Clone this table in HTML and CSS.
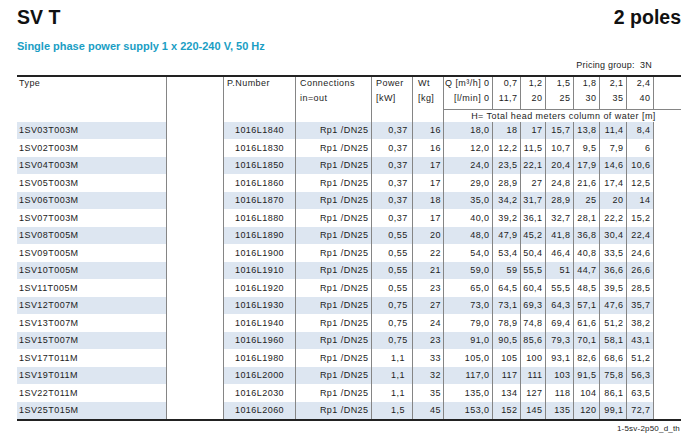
FILE: index.html
```html
<!DOCTYPE html>
<html lang="en">
<head>
<meta charset="utf-8">
<title>SV T - 2 poles</title>
<link rel="stylesheet" href="styles.css">
</head>
<body>
<div class="page">
  <header class="titlebar">
    <h1 class="title">SV T</h1>
    <div class="poles">2 poles</div>
  </header>
  <h2 class="subtitle">Single phase power supply 1 x 220-240 V, 50 Hz</h2>
  <div class="pricing">Pricing group:&nbsp; 3N</div>
  <table class="data">
    <colgroup>
      <col class="w-type"><col class="w-blank"><col class="w-pn"><col class="w-conn"><col class="w-pow"><col class="w-wt"><col class="w-q0"><col class="w-c1"><col class="w-c2"><col class="w-c3"><col class="w-c4"><col class="w-c5"><col class="w-c6"><col class="w-end">
    </colgroup>
    <thead>
      <tr class="h1">
        <th class="hl type" rowspan="3">Type</th>
        <th class="blank" rowspan="3"></th>
        <th class="hl pn" rowspan="3">P.Number</th>
        <th class="hl conn">Connections</th>
        <th class="hl pow">Power</th>
        <th class="hl wt">Wt</th>
        <th class="hq">Q [m³/h] 0</th>
        <th class="hq">0,7</th><th class="hq">1,2</th><th class="hq">1,5</th><th class="hq">1,8</th><th class="hq">2,1</th><th class="hq">2,4</th>
        <th class="blank"></th>
      </tr>
      <tr class="h2">
        <th class="hl conn">in=out</th>
        <th class="hl pow">[kW]</th>
        <th class="hl wt">[kg]</th>
        <th class="hq">[l/min] 0</th>
        <th class="hq">11,7</th><th class="hq">20</th><th class="hq">25</th><th class="hq">30</th><th class="hq">35</th><th class="hq">40</th>
        <th class="blank"></th>
      </tr>
      <tr class="h3">
        <th class="conn"></th>
        <th class="pow"></th>
        <th class="wt"></th>
        <th class="hrow" colspan="8">H= Total head meters column of water [m]</th>
      </tr>
    </thead>
    <tbody>
      <tr class="alt"><td class="type">1SV03T003M</td><td class="blank"></td><td class="pn">1016L1840</td><td class="conn">Rp1 /DN25</td><td class="pow">0,37</td><td class="wt">16</td><td class="q">18,0</td><td class="q">18</td><td class="q">17</td><td class="q">15,7</td><td class="q">13,8</td><td class="q">11,4</td><td class="q">8,4</td><td class="blank"></td></tr>
      <tr><td class="type">1SV02T003M</td><td class="blank"></td><td class="pn">1016L1830</td><td class="conn">Rp1 /DN25</td><td class="pow">0,37</td><td class="wt">16</td><td class="q">12,0</td><td class="q">12,2</td><td class="q">11,5</td><td class="q">10,7</td><td class="q">9,5</td><td class="q">7,9</td><td class="q">6</td><td class="blank"></td></tr>
      <tr class="alt"><td class="type">1SV04T003M</td><td class="blank"></td><td class="pn">1016L1850</td><td class="conn">Rp1 /DN25</td><td class="pow">0,37</td><td class="wt">17</td><td class="q">24,0</td><td class="q">23,5</td><td class="q">22,1</td><td class="q">20,4</td><td class="q">17,9</td><td class="q">14,6</td><td class="q">10,6</td><td class="blank"></td></tr>
      <tr><td class="type">1SV05T003M</td><td class="blank"></td><td class="pn">1016L1860</td><td class="conn">Rp1 /DN25</td><td class="pow">0,37</td><td class="wt">17</td><td class="q">29,0</td><td class="q">28,9</td><td class="q">27</td><td class="q">24,8</td><td class="q">21,6</td><td class="q">17,4</td><td class="q">12,5</td><td class="blank"></td></tr>
      <tr class="alt"><td class="type">1SV06T003M</td><td class="blank"></td><td class="pn">1016L1870</td><td class="conn">Rp1 /DN25</td><td class="pow">0,37</td><td class="wt">18</td><td class="q">35,0</td><td class="q">34,2</td><td class="q">31,7</td><td class="q">28,9</td><td class="q">25</td><td class="q">20</td><td class="q">14</td><td class="blank"></td></tr>
      <tr><td class="type">1SV07T003M</td><td class="blank"></td><td class="pn">1016L1880</td><td class="conn">Rp1 /DN25</td><td class="pow">0,37</td><td class="wt">17</td><td class="q">40,0</td><td class="q">39,2</td><td class="q">36,1</td><td class="q">32,7</td><td class="q">28,1</td><td class="q">22,2</td><td class="q">15,2</td><td class="blank"></td></tr>
      <tr class="alt"><td class="type">1SV08T005M</td><td class="blank"></td><td class="pn">1016L1890</td><td class="conn">Rp1 /DN25</td><td class="pow">0,55</td><td class="wt">20</td><td class="q">48,0</td><td class="q">47,9</td><td class="q">45,2</td><td class="q">41,8</td><td class="q">36,8</td><td class="q">30,4</td><td class="q">22,4</td><td class="blank"></td></tr>
      <tr><td class="type">1SV09T005M</td><td class="blank"></td><td class="pn">1016L1900</td><td class="conn">Rp1 /DN25</td><td class="pow">0,55</td><td class="wt">22</td><td class="q">54,0</td><td class="q">53,4</td><td class="q">50,4</td><td class="q">46,4</td><td class="q">40,8</td><td class="q">33,5</td><td class="q">24,6</td><td class="blank"></td></tr>
      <tr class="alt"><td class="type">1SV10T005M</td><td class="blank"></td><td class="pn">1016L1910</td><td class="conn">Rp1 /DN25</td><td class="pow">0,55</td><td class="wt">21</td><td class="q">59,0</td><td class="q">59</td><td class="q">55,5</td><td class="q">51</td><td class="q">44,7</td><td class="q">36,6</td><td class="q">26,6</td><td class="blank"></td></tr>
      <tr><td class="type">1SV11T005M</td><td class="blank"></td><td class="pn">1016L1920</td><td class="conn">Rp1 /DN25</td><td class="pow">0,55</td><td class="wt">23</td><td class="q">65,0</td><td class="q">64,5</td><td class="q">60,4</td><td class="q">55,5</td><td class="q">48,5</td><td class="q">39,5</td><td class="q">28,5</td><td class="blank"></td></tr>
      <tr class="alt"><td class="type">1SV12T007M</td><td class="blank"></td><td class="pn">1016L1930</td><td class="conn">Rp1 /DN25</td><td class="pow">0,75</td><td class="wt">27</td><td class="q">73,0</td><td class="q">73,1</td><td class="q">69,3</td><td class="q">64,3</td><td class="q">57,1</td><td class="q">47,6</td><td class="q">35,7</td><td class="blank"></td></tr>
      <tr><td class="type">1SV13T007M</td><td class="blank"></td><td class="pn">1016L1940</td><td class="conn">Rp1 /DN25</td><td class="pow">0,75</td><td class="wt">24</td><td class="q">79,0</td><td class="q">78,9</td><td class="q">74,8</td><td class="q">69,4</td><td class="q">61,6</td><td class="q">51,2</td><td class="q">38,2</td><td class="blank"></td></tr>
      <tr class="alt"><td class="type">1SV15T007M</td><td class="blank"></td><td class="pn">1016L1960</td><td class="conn">Rp1 /DN25</td><td class="pow">0,75</td><td class="wt">23</td><td class="q">91,0</td><td class="q">90,5</td><td class="q">85,6</td><td class="q">79,3</td><td class="q">70,1</td><td class="q">58,1</td><td class="q">43,1</td><td class="blank"></td></tr>
      <tr><td class="type">1SV17T011M</td><td class="blank"></td><td class="pn">1016L1980</td><td class="conn">Rp1 /DN25</td><td class="pow">1,1</td><td class="wt">33</td><td class="q">105,0</td><td class="q">105</td><td class="q">100</td><td class="q">93,1</td><td class="q">82,6</td><td class="q">68,6</td><td class="q">51,2</td><td class="blank"></td></tr>
      <tr class="alt"><td class="type">1SV19T011M</td><td class="blank"></td><td class="pn">1016L2000</td><td class="conn">Rp1 /DN25</td><td class="pow">1,1</td><td class="wt">32</td><td class="q">117,0</td><td class="q">117</td><td class="q">111</td><td class="q">103</td><td class="q">91,5</td><td class="q">75,8</td><td class="q">56,3</td><td class="blank"></td></tr>
      <tr><td class="type">1SV22T011M</td><td class="blank"></td><td class="pn">1016L2030</td><td class="conn">Rp1 /DN25</td><td class="pow">1,1</td><td class="wt">35</td><td class="q">135,0</td><td class="q">134</td><td class="q">127</td><td class="q">118</td><td class="q">104</td><td class="q">86,1</td><td class="q">63,5</td><td class="blank"></td></tr>
      <tr class="alt"><td class="type">1SV25T015M</td><td class="blank"></td><td class="pn">1016L2060</td><td class="conn">Rp1 /DN25</td><td class="pow">1,5</td><td class="wt">45</td><td class="q">153,0</td><td class="q">152</td><td class="q">145</td><td class="q">135</td><td class="q">120</td><td class="q">99,1</td><td class="q">72,7</td><td class="blank"></td></tr>
    </tbody>
  </table>
  <div class="footer">1-5sv-2p50_d_th</div>
</div>
</body>
</html>
```
FILE: styles.css
```css
* { box-sizing: border-box; }

html, body {
  margin: 0;
  padding: 0;
  background: #ffffff;
}

body {
  font-family: "Liberation Sans", Arial, sans-serif;
  color: #1c1c1c;
}

.page {
  width: 697px;
  padding: 0 16px 0 17px;
}

.titlebar {
  display: flex;
  justify-content: space-between;
  align-items: flex-start;
  padding-top: 7px;
}

.title,
.poles {
  margin: 0;
  font-size: 19.5px;
  line-height: 20px;
  font-weight: bold;
  color: #111;
}

.subtitle {
  margin: 12.5px 0 0 0;
  font-size: 11px;
  line-height: 13px;
  font-weight: bold;
  color: #1a9ec4;
}

.pricing {
  margin-top: 7px;
  padding-right: 29px;
  text-align: right;
  font-size: 9px;
  line-height: 11px;
  letter-spacing: 0.2px;
}

.data {
  margin-top: 4.3px;
  width: 664px;
  table-layout: fixed;
  border-collapse: separate;
  border-spacing: 0;
  border-top: 2px solid #222;
  border-bottom: 2px solid #222;
  font-size: 9px;
  letter-spacing: 0.45px;
}

.w-type { width: 149px; }
.w-blank { width: 57px; }
.w-pn { width: 72px; }
.w-conn { width: 76px; }
.w-pow { width: 41px; }
.w-wt { width: 31px; }
.w-q0 { width: 49px; }
.w-c1 { width: 28px; }
.w-c2 { width: 25px; }
.w-c3 { width: 28px; }
.w-c4 { width: 26px; }
.w-c5 { width: 27px; }
.w-c6 { width: 27px; }
.w-end { width: 28px; }

.data th,
.data td {
  padding: 0;
  font-weight: normal;
  white-space: nowrap;
  overflow: visible;
}

/* vertical rules: every column except the first has a left rule */
.data th + th,
.data td + td,
.data .h2 th,
.data .h3 th {
  border-left: 1px solid #858585;
}

.data thead th {
  vertical-align: top;
}

.h1 th { height: 13px; line-height: 13px; }
.h2 th { height: 19px; line-height: 16px; }
.h3 th { height: 13px; line-height: 12px; }

.data .hl { text-align: left; }
.data .hl.type { padding-left: 2px; }
.data .hl.pn { padding-left: 3px; }
.data .hl.conn { padding-left: 4px; }
.data .hl.pow { padding-left: 4px; }
.data .hl.wt { padding-left: 5px; }
.data .hq { text-align: right; padding-right: 2.5px; }

.data .hrow {
  text-align: center;
  border-top: 1px solid #858585;
  vertical-align: middle;
  padding-left: 2px;
}

.data tbody tr { height: 17.5px; }
.data tbody td { vertical-align: middle; line-height: 11px; }

.data tbody tr.alt td { background: #dde6f1; }
.data tbody tr.alt td.blank { background: #ffffff; }

.data td.type { text-align: left; padding-left: 2px; }
.data td.pn { text-align: center; }
.data td.conn { text-align: right; padding-right: 2.5px; }
.data td.pow { text-align: center; padding-left: 12px; }
.data td.wt { text-align: right; padding-right: 2px; }
.data td.q { text-align: right; padding-right: 2.5px; }

.footer {
  margin-top: 2.5px;
  text-align: right;
  font-size: 8px;
  line-height: 9px;
  letter-spacing: 0.2px;
  padding-right: 1px;
  color: #222;
}
```
